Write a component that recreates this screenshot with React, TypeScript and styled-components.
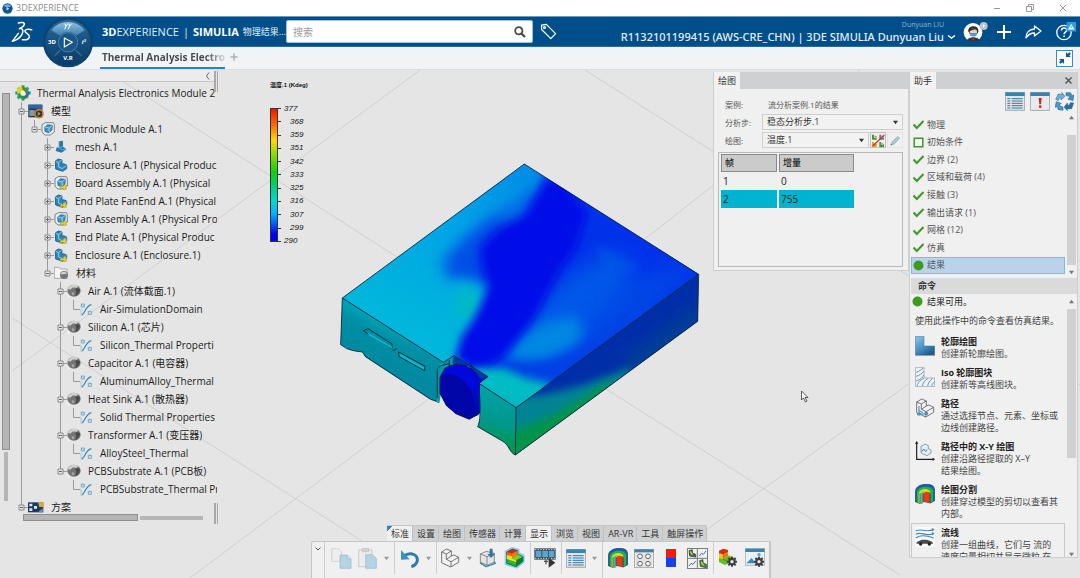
import React from "react";
import styled, { createGlobalStyle } from "styled-components";

const GlobalStyle = createGlobalStyle`
  * { box-sizing: border-box; }
  html, body { margin: 0; padding: 0; }
  body { font-family: "Open Sans", "Noto Sans CJK SC", sans-serif; color: #333; background: #e5e5e5; }
  button, input, select { font: inherit; color: inherit; margin: 0; padding: 0; }
  button { border: 0; background: none; display: inline-flex; align-items: center; justify-content: center; }
  ul { list-style: none; margin: 0; padding: 0; }
  h2, h3, p { margin: 0; font: inherit; }
  svg { display: block; flex: none; }
`;

/* ---------- frame ---------- */

const Page = styled.div`
  display: flex;
  flex-direction: column;
  min-height: 100vh;
`;

const TitleBar = styled.div`
  display: flex;
  align-items: center;
  height: 16px;
  padding: 0 12px 0 2px;
  gap: 3px;
  background: #fff;
  color: #8c8c8c;
  font-size: 9px;
  line-height: 16px;
`;

const WindowButtons = styled.div`
  display: flex;
  gap: 22px;
  margin-left: auto;
  button { width: 11px; height: 11px; }
`;

const TopBar = styled.header`
  position: relative;
  display: flex;
  align-items: center;
  height: 31px;
  padding: 0 4px 0 11px;
  background: #004f8a;
  border-top: 1px solid #6f9abb;
  border-bottom: 1px solid #2a6a98;
  color: #fff;
`;

const Compass = styled.button`
  position: absolute;
  left: 42px;
  top: 0;
  z-index: 2;
`;

const Brand = styled.div`
  display: flex;
  gap: 4px;
  margin-left: 69px;
  width: 184px;
  font-size: 11px;
  line-height: 16px;
  white-space: nowrap;
  color: #e4eef6;
  b { color: #fff; }
  small { font-size: 9px; }
`;

const SearchBox = styled.label`
  display: flex;
  align-items: center;
  width: 247px;
  height: 23px;
  padding: 0 6px;
  background: #fff;
  border: 1px solid #9fc3dc;
  border-radius: 2px;
  input {
    flex: 1;
    min-width: 0;
    border: 0;
    outline: 0;
    font-size: 10px;
    color: #333;
    background: none;
  }
  input::placeholder { color: #999; opacity: 1; }
`;

const TagButton = styled.button`
  margin-left: 7px;
`;

const Account = styled.div`
  display: flex;
  flex-direction: column;
  align-items: flex-end;
  margin-left: auto;
  padding-top: 2px;
  white-space: nowrap;
`;

const UserName = styled.span`
  padding-right: 12px;
  font-size: 7px;
  line-height: 8px;
  color: #8fb2cf;
`;

const TenantButton = styled.button`
  gap: 3px;
  font-family: "Noto Sans", "Noto Sans CJK SC", sans-serif;
  font-size: 11px;
  font-weight: 500;
  line-height: 16px;
  color: #e4eef6;
`;

const TopActions = styled.div`
  display: flex;
  align-items: center;
  gap: 14px;
  margin-left: 7px;
  svg { overflow: visible; }
`;

const TabBar = styled.nav`
  display: flex;
  align-items: stretch;
  height: 23px;
  padding: 0 7px 0 100px;
  background: #f2f3f5;
  border-bottom: 1px solid #dcdddf;
`;

const DocTab = styled.a`
  width: 125px;
  padding: 0 0 0 2px;
  border-bottom: 2px solid #2f83bd;
  overflow: hidden;
  font-size: 10px;
  font-weight: 700;
  line-height: 20px;
  text-decoration: none;
  white-space: nowrap;
  color: transparent;
  background: linear-gradient(90deg, #4a4a4a 85%, #dadada) text;
`;

const AddTab = styled.button`
  width: 18px;
  height: 20px;
`;

const RestoreButton = styled.button`
  align-self: center;
  width: 17px;
  height: 17px;
  margin-left: auto;
  background: #fff;
  border: 1px solid #4a88b4;
`;

/* ---------- workspace ---------- */

const Workspace = styled.main`
  flex: 1;
  display: grid;
  grid-template: minmax(508px, 1fr) / minmax(0, 1fr);
`;

const Scene = styled.svg`
  grid-area: 1 / 1;
  width: 100%;
  height: 100%;
`;

const Panels = styled.div`
  grid-area: 1 / 1;
  z-index: 1;
  display: flex;
  align-items: stretch;
`;

/* ---------- specification tree ---------- */

const TreePanel = styled.aside`
  display: flex;
  flex-direction: column;
  width: 218px;
`;

const TreeTop = styled.div`
  display: flex;
  justify-content: flex-end;
  align-items: center;
  height: 12px;
  margin-right: 4px;
  padding-right: 4px;
  background: #ececec;
  border-bottom: 1px solid #c9c9c9;
`;

const TreeBody = styled.div`
  display: flex;
  flex: 1;
`;

const VerticalScroll = styled.div`
  display: flex;
  flex-direction: column;
  align-items: center;
  width: 15px;
  gap: 2px;
  padding: 11px 4px 0 0;
`;

const Thumb = styled.span<{ $w: number; $h: number; $edge?: boolean }>`
  width: ${(p) => p.$w}px;
  height: ${(p) => p.$h}px;
  background: #b5b5b5;
  border: ${(p) => (p.$edge ? "1px solid #8f8f8f" : "0")};
`;

const HorizontalScroll = styled.div`
  display: flex;
  align-items: center;
  gap: 2px;
  padding-left: 8px;
  margin-top: -2px;
`;

const TreeColumn = styled.div`
  width: 202px;
  padding-top: 2px;
  overflow: hidden;
`;

const TreeRow = styled.li`
  display: flex;
  align-items: center;
  height: 18px;
  white-space: nowrap;
`;

const TreeLabel = styled.span<{ $root?: boolean }>`
  padding-left: ${(p) => (p.$root ? 6 : 7)}px;
  font-size: 10px;
  line-height: 18px;
  color: #1c1c1c;
`;

const Splitter = styled.div`
  display: flex;
  flex-direction: column;
  justify-content: space-between;
  width: 4px;
  margin: -11px 0 0 -3px;
  padding-bottom: 54px;
  span { height: 21px; border: solid #a9a9a9; border-width: 0 1px 0 2px; }
`;

/* ---------- centre ---------- */

const Centre = styled.section`
  display: flex;
  flex: 1;
  flex-direction: column;
  justify-content: space-between;
  min-width: 0;
`;

const CentreTop = styled.div`
  display: flex;
  justify-content: space-between;
  align-items: flex-start;
  padding: 0 0 0 52px;
`;

const Legend = styled.div`
  padding-top: 9px;
  font-family: "Liberation Sans", "Noto Sans CJK SC", sans-serif;
  font-size: 8px;
  color: #111;
`;

const LegendTitle = styled.h2`
  font-size: 6px;
  font-weight: 700;
  line-height: 12px;
  margin-bottom: 11px;
`;

const LegendBody = styled.div`
  display: flex;
  align-items: center;
  height: 146px;
`;

const ColourBar = styled.div`
  width: 8px;
  height: 134px;
  border: 1px solid #333;
  background: linear-gradient(#f01800, #ff6a00 12%, #ffd800 24%, #7ed800 36%, #10d010 48%, #00d070 58%, #00d8d8 70%, #00b4ff 79%, #0050ff 88%, #0000f0 95%);
`;

const LegendScale = styled.ul`
  display: flex;
  flex-direction: column;
  height: 146px;
`;

const LegendMark = styled.li<{ $end: boolean }>`
  display: flex;
  flex: 1;
  align-items: center;
  gap: ${(p) => (p.$end ? 3 : 9)}px;
  line-height: 12px;
  font-style: italic;
  &::before { content: ""; width: 3px; height: 1px; background: #333; }
`;

/* ---------- docked panels ---------- */

const PanelTabs = styled.div`
  display: flex;
  align-items: stretch;
  height: 17px;
  background: #cfd0d2;
  button { height: 17px; }
`;

const PanelTab = styled.button`
  padding: 0 4px;
  background: #f2f2f2;
  font-size: 9px;
  line-height: 17px;
`;

const ClosePanel = styled.button`
  width: 17px;
  margin-left: auto;
`;

const PlotPanel = styled.section`
  width: 196px;
  margin: 2px 0 0;
  background: #f0f0f0;
  border: 1px solid #cdced0;
  border-width: 0 1px 1px;
`;

const PlotForm = styled.div`
  display: grid;
  grid-template-columns: 37px minmax(0, 1fr);
  grid-auto-rows: 18px;
  align-items: center;
  padding: 6px 5px 3px 11px;
  font-size: 8px;
  color: #555;
`;

const CaseName = styled.output`
  padding-left: 6px;
`;

const FieldRow = styled.div`
  display: flex;
  align-items: center;
  gap: 1px;
`;

const SelectWrap = styled.div`
  display: grid;
  flex: 1;
  align-items: center;
  select {
    grid-area: 1 / 1;
    width: 100%;
    height: 16px;
    padding: 0 4px;
    appearance: none;
    background: #f2f2f2;
    border: 1px solid #cfcfcf;
    border-radius: 0;
    font-size: 9px;
    line-height: 14px;
    color: #333;
  }
  svg { grid-area: 1 / 1; justify-self: end; margin-right: 5px; pointer-events: none; }
`;

const SmallButton = styled.button<{ $raised?: boolean }>`
  width: 16px;
  height: 16px;
  border: 1px solid ${(p) => (p.$raised ? "#bfbfbf" : "#e4e4e4")};
`;

const FrameBox = styled.div`
  min-height: 115px;
  margin: 0 5px 3px 4px;
  border: 1px solid #b9b9bb;
`;

const FrameTable = styled.table`
  width: 137px;
  margin-top: 1px;
  border-spacing: 2px 0;
  table-layout: fixed;
  font-size: 10px;
  line-height: 16px;
  color: #222;
  th { height: 18px; padding: 0 3px; font-size: 9px; font-weight: 500; text-align: left; background: #cbcbcb; border: 1px solid #8a8a8a; }
  th:first-child { width: 56px; }
  td { height: 18px; padding: 0 2px; }
`;

const FrameRow = styled.tr<{ $selected?: boolean }>`
  td { background: ${(p) => (p.$selected ? "#00b4cf" : "transparent")}; }
`;

const AssistantPanel = styled.aside`
  display: flex;
  flex-direction: column;
  align-self: flex-start;
  width: 169px;
  margin: 2px 2px 20px 0;
  background: #f0f0f0;
  border: 1px solid #cdced0;
  border-width: 0 1px 1px;
`;

const AssistantTools = styled.div`
  display: flex;
  justify-content: flex-end;
  gap: 5px;
  padding: 3px 3px 4px;
`;

const StepArea = styled.div`
  display: flex;
  height: 160px;
  padding-left: 1px;
`;

const StepList = styled.ul`
  display: flex;
  flex: 1;
  flex-direction: column;
  height: 159px;
  padding-top: 1px;
`;

const Step = styled.li<{ $current?: boolean }>`
  display: flex;
  flex: 1;
  align-items: center;
  gap: 3px;
  padding-left: 1px;
  border: 1px solid ${(p) => (p.$current ? "#84b9de" : "transparent")};
  background: ${(p) => (p.$current ? "#bad3ea" : "transparent")};
  font-size: 9px;
  line-height: 14px;
  color: #555;
`;

const Scroller = styled.div`
  display: flex;
  flex-direction: column;
  align-items: center;
  width: 12px;
  span { width: 9px; background: #cfd0d2; }
`;

const StepThumb = styled.span`
  flex: 1;
  margin: 15px 0 5px;
`;

const CommandThumb = styled.span`
  height: 149px;
  margin: 5px 0 auto;
`;

const SectionTitle = styled.h2`
  height: 16px;
  margin: 3px 0 0 1px;
  padding-left: 7px;
  background: #dadada;
  font-size: 9px;
  font-weight: 700;
  line-height: 16px;
`;

const CommandArea = styled.div`
  display: flex;
  height: 263px;
  overflow: hidden;
  ${Scroller} { padding-top: 5px; }
`;

const CommandColumn = styled.div`
  flex: 1;
  min-width: 0;
  font-size: 9px;
  line-height: 12px;
  color: #444;
`;

const Status = styled.p`
  display: flex;
  align-items: center;
  gap: 4px;
  padding-left: 2px;
  height: 15px;
  color: #222;
`;

const Hint = styled.p`
  padding: 6px 0 5px 5px;
  white-space: nowrap;
`;

const Command = styled.li<{ $hover?: boolean }>`
  display: flex;
  gap: 6px;
  margin-left: 1px;
  padding: 3px 0 3px 3px;
  border: 1px solid ${(p) => (p.$hover ? "#c8c8c8" : "transparent")};
  border-width: 1px 1px 0;
  white-space: pre-line;
  h3 { font-weight: 700; color: #222; }
`;

/* ---------- action bar ---------- */

const ActionBar = styled.section`
  width: 460px;
  margin-left: 93px;
`;

const ActionTabs = styled.div`
  display: flex;
  margin-left: 76px;
`;

const ActionTab = styled.button<{ $active?: boolean; $first?: boolean }>`
  height: 16px;
  padding: 0 4px;
  font-size: 9px;
  line-height: 15px;
  color: #333;
  background: ${(p) => (p.$first ? "linear-gradient(135deg, #2e84c0 4px, transparent 4px), " : "")}${(p) => (p.$active ? "linear-gradient(#f0f0f0, #f0f0f0)" : "linear-gradient(#cfd0d2, #cfd0d2)")};
  border-top: 1px solid #c4c5c7;
  box-shadow: inset -1px 0 #bfc0c2;
`;

const ActionBody = styled.div`
  display: flex;
  height: 37px;
  background: #f0f0f0;
  border: 1px solid #c4c5c7;
  border-width: 1px 2px 0 1px;
  border-radius: 3px 0 0 0;
`;

const Collapse = styled.button`
  width: 12px;
  height: 14px;
`;

const Group = styled.div<{ $gap: number; $left: number; $right: number; $tall?: boolean }>`
  display: flex;
  align-items: center;
  align-self: flex-start;
  gap: ${(p) => p.$gap}px;
  height: ${(p) => (p.$tall ? 36 : 32)}px;
  padding: 0 ${(p) => p.$right}px ${(p) => (p.$tall ? 4 : 0)}px ${(p) => p.$left}px;
  border-left: 1px solid #cccdcf;
`;

const ChipButton = styled.button`
  width: 21px;
`;

/* ---------- icons ---------- */

const Caret = ({ up, c = "#777", s = 5 }: { up?: boolean; c?: string; s?: number }) => (
  <svg width={s} height={s} viewBox="0 0 6 6" aria-hidden>
    <path d={up ? "M0 5h6L3 1z" : "M0 1h6L3 5z"} fill={c} />
  </svg>
);

const Globe = () => (
  <svg width="11" height="11" viewBox="0 0 12 12">
    <circle cx="6" cy="6" r="5.6" fill="#12588f" />
    <path d="M2 3.4a4.8 4.8 0 0 1 8 0C9 5 3 5 2 3.4z" fill="#6fb3dd" />
    <path d="M5 4.4l3 1.8-3 1.8z" fill="#cfe6f4" />
  </svg>
);

const Logo = () => (
  <svg width="22" height="22" viewBox="0 0 66 66" fill="none" stroke="#fff" strokeWidth="4.5" strokeLinecap="round" strokeLinejoin="round">
    <path d="M22 6c8-3 19-2 18 4-1 6-9 10-15 13 9-1 14 4 9 15C28 51 16 58 4 61l18-24" />
    <path d="M62 26c-10-3-21-1-20 5 1 6 15 8 13 17-2 8-14 9-21 8" />
  </svg>
);

const CompassArt = () => (
  <svg width="52" height="52" viewBox="0 0 156 156">
    <defs>
      <linearGradient id="cmp" x1="0" y1="0" x2="0" y2="1">
        <stop offset="0" stopColor="#2c6a9c" />
        <stop offset=".5" stopColor="#17507f" />
        <stop offset="1" stopColor="#0a3c68" />
      </linearGradient>
      <linearGradient id="cmpTop" x1="0" y1="0" x2="0" y2="1">
        <stop offset="0" stopColor="#8ebedd" />
        <stop offset="1" stopColor="#3b7fb0" />
      </linearGradient>
    </defs>
    <circle cx="78" cy="76" r="75" fill="#0c4372" />
    <circle cx="78" cy="76" r="68" fill="url(#cmp)" />
    <path d="M28 40A62 62 0 0 1 128 40L102 56a32 32 0 0 0-48 0z" fill="url(#cmpTop)" />
    <path d="M38 116l16-16M118 116l-16-16" stroke="#4d8ebd" strokeWidth="3" />
    <circle cx="78" cy="76" r="29" fill="#1a5688" stroke="#4383b3" strokeWidth="3" />
    <path d="M67 63v27l24-14z" fill="none" stroke="#fff" strokeWidth="3.5" strokeLinejoin="round" />
    <path d="M68 20l4 8 6-8M72 28l-4 9M80 20l3 7 6-7M83 27l-5 10" fill="none" stroke="#fff" strokeWidth="3" />
    <g fill="#fff" fontFamily="Open Sans, sans-serif" fontWeight="700" fontSize="18" textAnchor="middle">
      <text x="30" y="82">3D</text>
      <text x="125" y="82" fontStyle="italic">i²</text>
      <text x="78" y="128">V.R</text>
    </g>
  </svg>
);

const SearchIcon = () => (
  <svg width="12" height="12" viewBox="0 0 12 12" fill="none" stroke="#4a4a4a">
    <circle cx="4.8" cy="4.8" r="3.6" strokeWidth="1.8" />
    <path d="M7.6 7.6l3.4 3.4" strokeWidth="2.2" />
  </svg>
);

const TagIcon = () => (
  <svg width="17" height="17" viewBox="0 0 17 17" fill="none" stroke="#fff" strokeWidth="1.2" strokeLinejoin="round">
    <path d="M1.5 2.2l4.8-.8L15.6 10.600l-4.800 5L1.600 6.500z" />
    <circle cx="4.500" cy="4.500" r="1" />
  </svg>
);

const Avatar = () => (
  <svg width="20" height="22" viewBox="0 0 60 66">
    <circle cx="30" cy="34" r="28" fill="#fff" />
    <path d="M16 30c-2-16 26-20 30-4 1 8-2 10-4 12H20z" fill="#2b2a2c" />
    <ellipse cx="31" cy="33" rx="11" ry="11" fill="#f2cdb4" />
    <path d="M16 29c4-8 20-10 29-3-8-1-18 0-27 6z" fill="#2b2a2c" />
    <path d="M20 36h22v5c-5 7-17 7-22 0z" fill="#39a3dc" />
    <path d="M12 58c4-12 34-12 38 0-10 7-28 7-38 0z" fill="#2a3552" />
    <path d="M27 48h8l-4 13z" fill="#c0392b" />
    <circle cx="62" cy="15" r="12" fill="#b9c0c6" />
    <path d="M62 10v10M57 15h10" stroke="#eef" strokeWidth="3" />
  </svg>
);

const PlusIcon = () => (
  <svg width="14" height="14" viewBox="0 0 14 14" stroke="#fff" strokeWidth="2"><path d="M7 0v14M0 7h14" /></svg>
);

const ShareIcon = () => (
  <svg width="17" height="16" viewBox="0 0 17 16" fill="none" stroke="#fff" strokeWidth="1.300" strokeLinejoin="round">
    <path d="M9.500 2l6.500 5-6.500 5V9C6 9 3.500 10 1 14 1 8.500 4.500 5.200 9.500 5z" />
  </svg>
);

const HelpIcon = () => (
  <svg width="20" height="19" viewBox="0 0 20 19" fill="none">
    <circle cx="8" cy="10.500" r="7.200" stroke="#fff" strokeWidth="1.300" />
    <path d="M5.400 8.600c0-3.600 5.200-3.400 5.200-.4 0 2-2.500 2-2.500 4M8.100 13.600v1.400" stroke="#fff" strokeWidth="1.500" />
    <path d="M10.500 0H20v9.500h-9.500z" fill="#2a9fdc" />
    <path d="M15.200 2l3.400 5.600h-6.800z" fill="#fff" />
    <path d="M15.200 4v2" stroke="#2a9fdc" />
  </svg>
);

const RootGear = () => (
  <svg width="16" height="16" viewBox="0 0 48 48">
    <g strokeWidth="9">
      <path d="M24 1v46" stroke="#3a9a2c" /><path d="M1 24h46" stroke="#1f7fc0" />
      <path d="M8 8l32 32" stroke="#e2c21c" /><path d="M40 8L8 40" stroke="#2a9ac0" />
    </g>
    <circle cx="24" cy="24" r="14" fill="none" stroke="#2f9a3c" strokeWidth="8" />
    <path d="M10 26a14 14 0 0 1 12-16" fill="none" stroke="#e8d41c" strokeWidth="8" />
    <path d="M38 22a14 14 0 0 1-12 16" fill="none" stroke="#1c78bc" strokeWidth="8" />
    <circle cx="24" cy="24" r="8" fill="#f4f6d0" />
    <path d="M27 14l7 8" stroke="#e04a1c" strokeWidth="4" />
  </svg>
);

const ModelIcon = () => (
  <svg width="16" height="15" viewBox="0 0 48 45">
    <path d="M1 2h42v38H1z" fill="#23364e" /><path d="M1 2h42v12H1z" fill="#2d66a8" />
    <path d="M4 18h16v18H4z" fill="#8796a4" />
    <circle cx="33" cy="29" r="12" fill="#3a2a14" stroke="#c88430" strokeWidth="5" />
    <path d="M29 22v14l10-7z" fill="#6a98c8" />
  </svg>
);

const Wrench = () => <path d="M20 29l6 3 6-6 7 3-4 5 3 5-7 2-3-4-10 2z" fill="#e6d02a" stroke="#a08c10" strokeWidth="1.500" />;

const ProductIcon = ({ wrench }: { wrench?: boolean }) => (
  <svg width="14" height="14" viewBox="0 0 42 42">
    <path d="M3 8l10-6h24l3 6v22l-12 9H12l-9-8z" fill="#eceef0" stroke="#5f6b75" strokeWidth="2.500" />
    <path d="M11 15l9-7 14 2-1 14-8 8-13-3z" fill="#3f92c4" stroke="#1c5c88" strokeWidth="2" />
    <path d="M11 15l13 3 10-8M24 18l1 14" fill="none" stroke="#a8d8f0" strokeWidth="2.500" />
    {wrench && <Wrench />}
  </svg>
);

const PartIcon = ({ wrench }: { wrench?: boolean }) => (
  <svg width="14" height="14" viewBox="0 0 42 42" strokeLinejoin="round">
    <path d="M4 9l9-6 11 3v13l5-2 9 4v11l-12 8L5 33z" fill="#2f86b8" stroke="#1a587f" strokeWidth="2.500" />
    <path d="M5 10l9 4v13l12 5M14 13l9-6M26 31l11-8" fill="none" stroke="#a6dcf4" strokeWidth="2.500" />
    {wrench && <Wrench />}
  </svg>
);

const MeshIcon = () => (
  <svg width="14" height="14" viewBox="0 0 42 42">
    <path d="M15 4l12-2v18l10 8-14 10-18-5 3-11 7 1z" fill="#2878aa" />
    <path d="M15 4v19l9 6M27 20l-12 3M24 29l13-1" fill="none" stroke="#5fb0d8" strokeWidth="2.500" />
  </svg>
);

const FolderIcon = () => (
  <svg width="15" height="14" viewBox="0 0 45 42">
    <path d="M1 4h14l4 5h20v28H1z" fill="#f4f4f4" stroke="#8b8b8b" strokeWidth="2" />
    <circle cx="30" cy="27" r="12" fill="#777" /><path d="M20 24c4-9 16-9 20 0-8-3-12 3-20 0z" fill="#d6d6d6" />
  </svg>
);

const BallIcon = () => (
  <svg width="14" height="14" viewBox="0 0 42 42">
    <ellipse cx="21" cy="20" rx="20" ry="18" fill="#757575" />
    <path d="M3 14C10-1 30 0 33 8c-7 8-14-2-20 6-3 4-8 3-10 0z" fill="#d2d2d2" />
    <path d="M24 16c6-6 13-3 15 2-2 10-8 16-15 18 5-9 6-14 0-20z" fill="#484848" />
    <path d="M14 26c4-3 8 0 8 6-4 3-8 0-8-6z" fill="#a8a8a8" />
    <path d="M0 28l11 12H2z" fill="#f6f6f6" />
  </svg>
);

const PropertyIcon = () => (
  <svg width="13" height="13" viewBox="0 0 39 39" fill="none">
    <path d="M5 37C16 32 15 10 34 5" stroke="#2f86b8" strokeWidth="3.500" />
    <path d="M4 3h9v9H4zM25 25h9v9h-9z" fill="#cfe2ee" stroke="#5a9cc4" strokeWidth="2.500" />
    <path d="M3 17v20" stroke="#90b8d0" strokeWidth="2" />
  </svg>
);

const ScenarioIcon = () => (
  <svg width="16" height="11" viewBox="0 0 48 33">
    <path d="M0 1h46v30H0z" fill="#1d3a66" />
    <path d="M4 5h9v8H4zM4 19h9v8H4zM18 12h9v8h-9z" fill="#dde8f2" />
    <path d="M30 1h16v14H34z" fill="#d8b02a" /><path d="M30 31l14-12v12z" fill="#7e8d9a" />
  </svg>
);

const CheckIcon = () => (
  <svg width="11" height="11" viewBox="0 0 11 11" fill="none" stroke="#3a9a22" strokeWidth="2"><path d="M.5 5.500l3.300 3.500L10.500 2" /></svg>
);
const SquareIcon = () => (
  <svg width="11" height="11" viewBox="0 0 11 11"><path d="M1.200 1.200h8.600v8.600H1.200z" fill="#fbfbfb" stroke="#3a9a22" strokeWidth="1.500" /></svg>
);
const DotIcon = () => (
  <svg width="11" height="11" viewBox="0 0 11 11"><circle cx="5.500" cy="5.500" r="5" fill="#3f9a20" /></svg>
);

const ListWindow = () => (
  <svg width="20" height="19" viewBox="0 0 60 57">
    <path d="M1 1h58v54H1z" fill="#e2e6ea" stroke="#7c868e" strokeWidth="2" /><path d="M1 1h58v11H1z" fill="#3a82b0" />
    <path d="M7 20h9M7 27h9M7 34h9M7 41h9M7 48h9M20 20h33M20 27h33M20 34h33M20 41h33M20 48h33" stroke="#3576a4" strokeWidth="3" />
  </svg>
);
const AlertWindow = () => (
  <svg width="20" height="19" viewBox="0 0 60 57">
    <path d="M1 1h58v54H1z" fill="#e8eaec" stroke="#7c868e" strokeWidth="2" /><path d="M1 1h58v11H1z" fill="#3a82b0" />
    <path d="M26 18h9l-2 19h-5z" fill="#cc2418" /><circle cx="30.500" cy="44" r="4" fill="#cc2418" />
  </svg>
);
const SyncIcon = () => (
  <svg width="19" height="19" viewBox="0 0 57 57" strokeLinejoin="round">
    <path d="M2 22L10 6l13 1-3-6 10 12-12 11 0-7-5 1-3 8z" fill="#6ab2da" stroke="#1f5c86" strokeWidth="1.500" />
    <path d="M33 2h14l4 9 6-3-3 18-16-5 6-3-3-6-8-1z" fill="#3f90c0" stroke="#1f5c86" strokeWidth="1.500" />
    <path d="M56 33l-6 17-14 1 2 5-11-10 10-13 1 7 5-1 3-7z" fill="#2a6f9c" stroke="#1f5c86" strokeWidth="1.500" />
    <path d="M24 55l-14-2-4-9-6 2 4-17 15 5-5 3 3 6 7 2z" fill="#4a9ac8" stroke="#1f5c86" strokeWidth="1.500" />
  </svg>
);

const ContourIcon = () => (
  <svg width="20" height="20" viewBox="0 0 60 60">
    <defs><linearGradient id="ct" x1="0" y1="0" x2=".6" y2="1"><stop offset="0" stopColor="#8cc8ee" /><stop offset=".6" stopColor="#4a90c0" /><stop offset="1" stopColor="#1f5c8a" /></linearGradient></defs>
    <path d="M1 1h26v29h32v28H1z" fill="url(#ct)" stroke="#3a6e92" strokeWidth="1.500" />
  </svg>
);
const IsoIcon = () => (
  <svg width="20" height="20" viewBox="0 0 60 60" fill="none">
    <path d="M1 1h26v32h32v26H1z" fill="#eef2f4" stroke="#8c969c" strokeWidth="2" />
    <path d="M3 16C10 14 20 8 24 3M3 28c10-2 18-8 23-15M3 42c12-3 20-10 23-18M6 57c4-14 14-20 21-24M22 57c2-10 8-18 16-22M38 57c1-8 6-16 14-22M50 57c1-5 4-9 8-12" stroke="#4a8ab4" strokeWidth="2.500" />
  </svg>
);
const SolidL = ({ path }: { path?: boolean }) => (
  <svg width="20" height="20" viewBox="0 0 60 60" fill="#f2f2f2" stroke="#5c5c5c" strokeWidth="2.500" strokeLinejoin="round">
    <path d="M5 12L20 3l14 6v15l8-3 14 7v15L32 57 5 44z" />
    <path d="M5 12l14 6v16l14 7M19 18L34 9M19 34l15-10M33 41v16M33 41l23-13" fill="none" />
    {path && <path d="M12 24v24h22M12 38l12 6M8 46h8v5H8zM30 44h8v5h-8z" fill="none" stroke="#2f86b8" strokeWidth="3" />}
  </svg>
);
const XYIcon = () => (
  <svg width="20" height="20" viewBox="0 0 60 60">
    <path d="M5 4v51h52" fill="none" stroke="#1c1c1c" strokeWidth="3.500" />
    <path d="M0 8l5-8 5 8zM53 50l7 5-7 5z" fill="#1c1c1c" />
    <path d="M18 16l12-7 10 5v9l8 4v9l-12 8-18-8z" fill="#e6edf2" stroke="#66747e" strokeWidth="2" />
    <path d="M20 32l6-8 6 8 4-6" stroke="#2f86b8" strokeWidth="3" fill="none" />
  </svg>
);
const ArchIcon = () => (
  <svg width="20" height="20" viewBox="0 0 60 60" strokeLinejoin="round">
    <path d="M1 22L4 13C14-2 48-2 56 8l3 10v32l-13 7-22-5v4l-8 3L1 53z" fill="#1a5cc8" stroke="#1b3a50" strokeWidth="2" />
    <path d="M6 54V22C14 4 46 4 54 18v34l-8 4V28c-6-10-20-8-24 2v28l-6 1z" fill="#22b53a" />
    <path d="M11 56V27c6-14 28-16 35-4v8c-6-8-20-6-23 2v24l-7 2z" fill="#d8e020" />
    <path d="M16 57V30c3-6 8-8 12-9-4 4-5 8-5 12v24z" fill="#28c0d8" />
    <path d="M24 29c5-7 15-7 21-2v29l-21-5z" fill="#e83a16" />
    <path d="M24 29v23M45 26v30M15 28v30" stroke="#3a3a20" strokeWidth="2" />
  </svg>
);
const StreamIcon = () => (
  <svg width="20" height="20" viewBox="0 0 60 60" fill="none">
    <path d="M0 0h60v60H0z" fill="#fafafa" />
    <path d="M2 12c18-10 26 6 54-4M2 22c18-10 28 8 54-2M2 33c16-10 28-8 54 0" stroke="#3a88b8" strokeWidth="3.500" />
    <path d="M50 3l9 4-7 6zM50 15l9 4-7 6z" fill="#3a88b8" />
    <path d="M4 50c0-8 10-8 16-12h16c8 4 18 4 18 12z" fill="#4a4a4a" /><circle cx="17" cy="51" r="5" fill="#222" /><circle cx="43" cy="51" r="5" fill="#222" />
  </svg>
);

const CopyIcon = () => (
  <svg width="21" height="21" viewBox="0 0 63 63" strokeWidth="2">
    <path d="M2 2h20l10 10v28H2z" fill="#eeeeee" stroke="#c6c6c6" />
    <path d="M27 21h22l11 11v29H27z" fill="#b4d3e4" stroke="#93b8cc" /><path d="M49 21v11h11" fill="#dcebf3" stroke="#93b8cc" />
  </svg>
);
const PasteIcon = () => (
  <svg width="20" height="21" viewBox="0 0 60 63" strokeWidth="2">
    <path d="M2 6h40v50H2z" fill="#ececec" stroke="#bdbdbd" /><path d="M12 1h20v10H12z" fill="#d2d2d2" stroke="#bdbdbd" />
    <path d="M23 20h20l12 11v30H23z" fill="#b4d3e4" stroke="#93b8cc" />
  </svg>
);
const UndoIcon = () => (
  <svg width="20" height="19" viewBox="0 0 60 57">
    <path d="M15 19C34 8 54 18 52 35 50 45 44 50 34 53" fill="none" stroke="#2f7cac" strokeWidth="9" />
    <path d="M3 3v29l26-1z" fill="#3f8fc0" />
  </svg>
);
const CubeArrow = () => (
  <svg width="18" height="20" viewBox="0 0 54 60" strokeLinejoin="round">
    <path d="M3 44l18 12 28-10-6-6" fill="none" stroke="#2f86b8" strokeWidth="4" />
    <path d="M4 18l18-8 24 6v26L24 52 4 42z" fill="#e4e4e4" stroke="#777" strokeWidth="2.500" />
    <path d="M4 18l20 8v26M24 26l22-10" fill="none" stroke="#777" strokeWidth="2.500" />
    <path d="M32 2h9v16h7L36 30 25 18h7z" fill="#2a77a8" />
  </svg>
);
const RainbowPart = () => (
  <svg width="22" height="22" viewBox="0 0 66 66" strokeLinejoin="round">
    <path d="M5 13L24 3l20 5v10l15 7v20L38 62 5 52z" fill="#2a8fd0" stroke="#8ed0f0" strokeWidth="6" />
    <path d="M8 15l17-9 16 5v12l16 6v14L36 59 8 49z" fill="#2bb52f" stroke="#17446a" strokeWidth="2" />
    <path d="M8 15l17-9 16 5-17 9z" fill="#d62416" /><path d="M8 15l16 5v8L8 24z" fill="#e8641a" />
    <path d="M8 24l16 4v6l14 6 0 6-30-10z" fill="#f0dc1c" />
    <path d="M24 20l17-9v12l-17 11z" fill="#f07818" /><path d="M24 34l17-11 16 6-20 11z" fill="#7ed020" />
    <path d="M37 40l20-11v14L36 59z" fill="#157a2c" />
  </svg>
);
const GearShape = ({ x, y }: { x: number; y: number }) => (
  <g transform={`translate(${x} ${y})`} stroke="#3a3f44" strokeWidth="6">
    <path d="M0-15v30M-15 0h30M-11-11l22 22M11-11l-22 22" /><circle r="8" fill="#e8e8e8" strokeWidth="6" />
  </g>
);
const RainbowGear = () => (
  <svg width="20" height="20" viewBox="0 0 60 60">
    <path d="M3 9l12-7 15 4v14l16 6v16L20 50 3 42z" fill="#f0c81c" />
    <path d="M3 9l12-7 15 4v6l-14 7-13-3z" fill="#dc2a18" /><path d="M16 20l14-8v12l-14 8z" fill="#f07818" />
    <path d="M3 30l13 4 14-10 16 4v14L20 50 3 42z" fill="#5cc02c" />
    <path d="M3 9l13 5v20l12 5" fill="none" stroke="#6a4a18" strokeWidth="1.500" />
    <GearShape x={42} y={41} />
  </svg>
);
const FilmIcon = () => (
  <svg width="22" height="22" viewBox="0 0 66 66">
    <path d="M1 4h64v34H1z" fill="#3c4c58" /><path d="M5 12h17v18H5zM25 12h17v18H25zM45 12h16v18H45z" fill="#5aa6d0" />
    <path d="M3 8h60M3 34h60" stroke="#dfe6ea" strokeWidth="3" strokeDasharray="4 4" />
    <path d="M30 43h12M36 38v14" stroke="#555" strokeWidth="4" /><path d="M44 32v30l20-15z" fill="#333" />
  </svg>
);
const CirclesWindow = () => (
  <svg width="20" height="19" viewBox="0 0 60 57">
    <path d="M1 1h58v55H1z" fill="#e4e4e4" stroke="#7c868e" strokeWidth="2" /><path d="M1 1h58v9H1z" fill="#3a82b0" />
    <g fill="#f4f4f4" stroke="#666" strokeWidth="3"><circle cx="18" cy="22" r="7" /><circle cx="42" cy="22" r="7" /><circle cx="18" cy="44" r="7" /><circle cx="42" cy="44" r="7" /></g>
  </svg>
);
const RedBlue = () => (
  <svg width="10" height="18" viewBox="0 0 10 18"><path d="M0 0h10v9H0z" fill="#f01c0c" /><path d="M0 9h10v9H0z" fill="#1440f0" /></svg>
);
const QuadPlots = () => (
  <svg width="21" height="21" viewBox="0 0 63 63">
    <path d="M1 1h61v61H1z" fill="#f0f0f0" stroke="#666" strokeWidth="3" /><path d="M31 1v61M1 31h61" stroke="#777" strokeWidth="3" />
    <path d="M6 8l10-3v10l10 4v8L8 24z" fill="#2c7c50" stroke="#222" strokeWidth="2" /><path d="M38 38l10-3v10l10 4v10l-18-4z" fill="#3c9c40" stroke="#222" strokeWidth="2" />
    <path d="M10 10l6 10M42 42l8 10" stroke="#f0c818" strokeWidth="4" />
    <path d="M37 24l6-8 6 3 8-10M6 54l6-8 6 3 8-10" fill="none" stroke="#2f7cac" strokeWidth="3" />
  </svg>
);
const WindowGear = () => (
  <svg width="20" height="20" viewBox="0 0 60 60">
    <path d="M1 2h58v50H1z" fill="#eaf0f4" stroke="#8c969c" strokeWidth="2" /><path d="M1 2h58v10H1z" fill="#3a82b0" />
    <path d="M4 46l16-16 12 16z" fill="#3a88b8" /><circle cx="42" cy="20" r="5" fill="#5aa6d0" />
    <GearShape x={42} y={41} />
  </svg>
);
const PlotOff = () => (
  <svg width="13" height="13" viewBox="0 0 39 39" fill="none" strokeWidth="6">
    <path d="M3 2v12h11" stroke="#2f9a4c" /><path d="M25 2v12h11" stroke="#3a88b8" /><path d="M3 24v12h11" stroke="#e0a81c" /><path d="M25 24v12h11" stroke="#2f9a4c" />
    <path d="M8 6l6 4M30 6l6 4M8 29l6 4M30 29l6 4" stroke="#e8841c" strokeWidth="4" />
    <path d="M2 36L37 3" stroke="#e02c18" strokeWidth="4" />
  </svg>
);
const PencilIcon = () => (
  <svg width="11" height="11" viewBox="0 0 33 33"><path d="M2 31l4-10L23 4l6 6-17 17z" fill="#a9c8dc" stroke="#8fa9ba" strokeWidth="2" /><path d="M2 31l2-5 3 3z" fill="#666" /></svg>
);

/* ---------- tree data ---------- */

/* Guide characters: "|" a passing line, "+"/"-" a node, "_" the last open node, "L" a leaf elbow. */
const GuideCell = ({ kind }: { kind: string }) => (
  <svg width="13" height="18" viewBox="0 0 13 18" fill="none" stroke="#9a9a9a" aria-hidden>
    {kind === "|" && <path d="M6.500 0v18" />}
    {kind === "L" && <path d="M6.500 0v9.500H13" />}
    {"+-_".includes(kind) && (
      <>
        <path d={kind === "_" ? "M6.500 0v9.500H13" : "M6.500 0v18M6 9.500h7"} />
        <path d="M4 7h5v5H4z" fill="#e6e6e6" stroke="#8a8a8a" />
        <path d={kind === "+" ? "M5 9.500h3M6.500 8v3" : "M5 9.500h3"} stroke="#666" />
      </>
    )}
  </svg>
);

const TREE: [string, React.ReactNode, string][] = [
  ["-", <ModelIcon />, "模型"],
  ["|_", <ProductIcon />, "Electronic Module A.1"],
  ["| +", <MeshIcon />, "mesh A.1"],
  ["| +", <PartIcon />, "Enclosure A.1 (Physical Produc"],
  ["| +", <ProductIcon wrench />, "Board Assembly A.1 (Physical"],
  ["| +", <PartIcon wrench />, "End Plate FanEnd A.1 (Physical"],
  ["| +", <ProductIcon wrench />, "Fan Assembly A.1 (Physical Pro"],
  ["| +", <PartIcon wrench />, "End Plate A.1 (Physical Produc"],
  ["| +", <PartIcon wrench />, "Enclosure A.1 (Enclosure.1)"],
  ["| _", <FolderIcon />, "材料"],
  ["|  -", <BallIcon />, "Air A.1 (流体截面.1)"],
  ["|  |L", <PropertyIcon />, "Air-SimulationDomain"],
  ["|  -", <BallIcon />, "Silicon A.1 (芯片)"],
  ["|  |L", <PropertyIcon />, "Silicon_Thermal Properti"],
  ["|  -", <BallIcon />, "Capacitor A.1 (电容器)"],
  ["|  |L", <PropertyIcon />, "AluminumAlloy_Thermal"],
  ["|  -", <BallIcon />, "Heat Sink A.1 (散热器)"],
  ["|  |L", <PropertyIcon />, "Solid Thermal Properties"],
  ["|  -", <BallIcon />, "Transformer A.1 (变压器)"],
  ["|  |L", <PropertyIcon />, "AlloySteel_Thermal"],
  ["|  _", <BallIcon />, "PCBSubstrate A.1 (PCB板)"],
  ["|   L", <PropertyIcon />, "PCBSubstrate_Thermal Pr"],
  ["_", <ScenarioIcon />, "方案"],
];

const LEGEND = [377, 368, 359, 351, 342, 333, 325, 316, 307, 299, 290];

const STEPS: [string, "check" | "square" | "dot"][] = [
  ["物理", "check"],
  ["初始条件", "square"],
  ["边界 (2)", "check"],
  ["区域和载荷 (4)", "check"],
  ["接触 (3)", "check"],
  ["输出请求 (1)", "check"],
  ["网格 (12)", "check"],
  ["仿真", "check"],
  ["结果", "dot"],
];

const COMMANDS: [React.ReactNode, string, string][] = [
  [<ContourIcon />, "轮廓绘图", "创建新轮廓绘图。"],
  [<IsoIcon />, "Iso 轮廓图块", "创建新等高线图块。"],
  [<SolidL path />, "路径", "通过选择节点、元素、坐标或\n边线创建路径。"],
  [<XYIcon />, "路径中的 X-Y 绘图", "创建沿路径提取的 X–Y\n结果绘图。"],
  [<ArchIcon />, "绘图分割", "创建穿过模型的剪切以查看其\n内部。"],
  [<StreamIcon />, "流线", "创建一组曲线，它们与 流的\n速度向量相切并显示微粒 在"],
];

const ACTION_TABS = ["标准", "设置", "绘图", "传感器", "计算", "显示", "浏览", "视图", "AR-VR", "工具", "触屏操作"];

/* ---------- 3D scene ---------- */

const HeatModel = () => (
  <g transform="translate(330 150) scale(.33333)">
    <defs>
      <clipPath id="topFace"><path d="M583 42L1106 373 558 773 447 700 474 680 372 617 340 637 37 444z" /></clipPath>
      <clipPath id="sideFace"><path d="M1106 373L1103 514 556 915 558 773z" /></clipPath>
      <linearGradient id="topBase" gradientUnits="userSpaceOnUse" x1="580" y1="50" x2="330" y2="560">
        <stop offset="0" stopColor="#008ee6" /><stop offset=".45" stopColor="#00a4e6" /><stop offset="1" stopColor="#00b6da" />
      </linearGradient>
      <linearGradient id="leftFace" gradientUnits="userSpaceOnUse" x1="200" y1="540" x2="150" y2="640">
        <stop offset="0" stopColor="#00a0b4" /><stop offset=".3" stopColor="#008fa4" /><stop offset="1" stopColor="#0089a0" />
      </linearGradient>
      <linearGradient id="frontFace" gradientUnits="userSpaceOnUse" x1="510" y1="740" x2="490" y2="890">
        <stop offset="0" stopColor="#00a0a0" /><stop offset=".5" stopColor="#00988c" /><stop offset="1" stopColor="#00984c" />
      </linearGradient>
      {[6, 12, 20, 30].map((d) => (
        <filter key={d} id={`soft${d}`} x="-50%" y="-50%" width="200%" height="200%"><feGaussianBlur stdDeviation={d} /></filter>
      ))}
    </defs>
    <g clipPath="url(#topFace)">
      <path d="M0 0h1140v900H0z" fill="url(#topBase)" />
      <path d="M325 350C365 280 430 235 620 110l30 60-160 230-80-20z" fill="#0068e6" filter="url(#soft20)" />
      <path d="M345 385C360 330 420 260 500 200l60 40-80 170-60-35z" fill="#004ce6" filter="url(#soft20)" />
      <path d="M660 60L1200 360 620 800 400 660 560 300 600 180z" fill="#0030ea" filter="url(#soft20)" />
      <path d="M820 400L1106 340 920 540 660 710 560 670 740 600z" fill="#0046e6" filter="url(#soft30)" />
      <path d="M500 630C560 540 640 430 760 350c60-40 100-40 150-10-20 60-70 120-130 190-60 60-160 110-280 100z" fill="#0058e8" filter="url(#soft30)" />
      <path d="M800 280L930 355 850 370 800 500 760 480 820 370z" fill="#0056e8" filter="url(#soft12)" opacity=".7" />
      <path d="M520 620c40-60 90-100 200-120 50 10 50 60 10 90-60 40-140 60-210 30z" fill="#0088e2" filter="url(#soft20)" />
      <path d="M540 640C700 660 820 560 900 500L760 640 640 730 480 670z" fill="#0040e4" filter="url(#soft12)" opacity=".8" />
      <ellipse cx="410" cy="460" rx="34" ry="46" fill="#00bcc0" filter="url(#soft20)" />
      <path d="M650 85L700 90 770 190 740 290 690 360 610 510 530 610 450 670 375 625 395 560 430 510 460 450 474 405 455 350 450 290 500 240 590 190 625 130z" fill="#0008e8" filter="url(#soft12)" />
      <path d="M410 665L440 655 520 655 590 685 665 700 600 800 430 720z" fill="#00bcc4" filter="url(#soft12)" />
    </g>
    <g clipPath="url(#sideFace)">
      <path d="M500 300h660v640H500z" fill="#002ea8" />
      <path d="M880 620L1120 450 1120 560 880 720z" fill="#003c98" filter="url(#soft20)" />
      <path d="M520 740L640 735 760 705 900 655 920 730 560 980 500 900z" fill="#008494" filter="url(#soft12)" />
      <path d="M530 850L660 800 850 690 840 740 560 960z" fill="#009448" filter="url(#soft12)" />
    </g>
    <path d="M37 444L340 637 322 660 322 756 300 748 105 620 98 606 75 603 60 600 32 584z" fill="url(#leftFace)" />
    <path d="M322 660l18-23 32-20 20 30-50 30-14 82h-6z" fill="#0098a8" />
    <path d="M447 700L558 773 556 915C535 905 540 885 515 872L443 830l8-30z" fill="url(#frontFace)" />
    <path d="M372 617l102 63-27 20-30-50-50-10z" fill="#0038a8" />
    <path d="M330 680L345 655 375 642 405 645 432 662 446 682 460 686 450 700 450 790 418 808 375 790 350 768 330 730z" fill="#0008dc" />
    <path d="M330 682Q348 664 382 678 424 706 432 750L446 775 446 794 418 808 375 790 350 768 330 730z" fill="#0006a8" />
    <g fill="none" stroke="#0a1c30" strokeWidth="2.500" strokeLinejoin="round">
      <path d="M340 637L37 444 583 42 1106 373 558 773 447 700l27-20-102-63-32 20" />
      <path d="M37 444l-5 140 18 12 25 7 22 3 10 14 195 128 18 6M558 773l-2 142L1103 514l3-141M556 915C535 905 540 885 515 872L443 830c10-20 8-60 4-130" />
      <path d="M358 630v20M322 745v-84c4-14 14-16 36-20M330 682l15-27c30-20 62-12 87 7l14 20M330 682v48l20 38M375 790l43 18 30-20M420 640l12 16M430 720l12 40" />
      <path d="M100 542l14-6 72 46v14l-72-44zM188 602l12-6M206 606l78 42v14l-76-42z" />
    </g>
    <path d="M114 548l72 42v6l-70-40zM208 610l74 42v7l-72-40z" fill="#00bccc" />
  </g>
);

const SceneView = () => (
  <Scene viewBox="0 70 1080 508" preserveAspectRatio="xMidYMid slice" role="img" aria-label="温度">
    <path d="M105 70L397 257M606 389L900 575M12 371L420 70M190 578L430 398M645 239L860 70M12 318L420 578M640 578L1080 260M585 70L1080 385" fill="none" stroke="#cfcfcf" />
    <HeatModel />
    <path d="M801.500 391v9l2-2 2 4 1.500-1-2-3.500h3z" fill="#fff" stroke="#333" strokeWidth=".8" />
  </Scene>
);

/* ---------- app ---------- */

export default function App() {
  return (
    <Page>
      <GlobalStyle />
      <TitleBar>
        <Globe />
        <span>3DEXPERIENCE</span>
        <WindowButtons>
          <button aria-label="最小化"><svg width="8" height="8" viewBox="0 0 8 8"><path d="M1 4.500h6" stroke="#999" /></svg></button>
          <button aria-label="还原"><svg width="8" height="8" viewBox="0 0 8 8" fill="none" stroke="#999"><path d="M.5 2.500h5v5h-5zM2.500 2.500v-2h5v5h-2" /></svg></button>
          <button aria-label="关闭"><svg width="8" height="8" viewBox="0 0 8 8" stroke="#999"><path d="M1 1l6 6M7 1L1 7" /></svg></button>
        </WindowButtons>
      </TitleBar>

      <TopBar>
        <Logo />
        <Compass aria-label="罗盘"><CompassArt /></Compass>
        <Brand><span><b>3D</b>EXPERIENCE</span>|<b>SIMULIA</b><small>物理结果...</small></Brand>
        <SearchBox>
          <input type="text" placeholder="搜索" aria-label="搜索" />
          <SearchIcon />
        </SearchBox>
        <TagButton aria-label="标签"><TagIcon /></TagButton>
        <Account>
          <UserName>Dunyuan LIU</UserName>
          <TenantButton>
            R1132101199415 (AWS-CRE_CHN) | 3DE SIMULIA Dunyuan Liu
            <svg width="9" height="6" viewBox="0 0 9 6" fill="none" stroke="#fff" strokeWidth="1.500"><path d="M1 1.500l3.500 2.500L8 1.500" /></svg>
          </TenantButton>
        </Account>
        <TopActions>
          <button aria-label="个人资料"><Avatar /></button>
          <button aria-label="添加"><PlusIcon /></button>
          <button aria-label="共享"><ShareIcon /></button>
          <button aria-label="帮助"><HelpIcon /></button>
        </TopActions>
      </TopBar>

      <TabBar>
        <DocTab href="#doc">Thermal Analysis Electro</DocTab>
        <AddTab aria-label="新建选项卡"><svg width="8" height="8" viewBox="0 0 8 8" stroke="#b0b0b0" strokeWidth="1.500"><path d="M4 .5v7M.5 4h7" /></svg></AddTab>
        <RestoreButton aria-label="还原面板">
          <svg width="12" height="12" viewBox="0 0 12 12" fill="#0f5a94"><path d="M7 0v5h5L10.300 3.500 12 1.800 10.300.2 8.600 1.700zM5 12V7H0l1.700 1.500L0 10.200l1.700 1.600L3.400 10.300z" /></svg>
        </RestoreButton>
      </TabBar>

      <Workspace>
        <SceneView />
        <Panels>
          <TreePanel>
            <TreeTop>
              <button aria-label="折叠"><svg width="5" height="8" viewBox="0 0 5 8" fill="none" stroke="#666"><path d="M4 .5L1.500 4 4 7.500" /></svg></button>
            </TreeTop>
            <TreeBody>
              <VerticalScroll>
                <Thumb $w={8} $h={357} $edge />
                <Thumb $w={4} $h={49} />
              </VerticalScroll>
              <TreeColumn>
                <ul>
                  <TreeRow><RootGear /><TreeLabel $root>Thermal Analysis Electronics Module 2</TreeLabel></TreeRow>
                  {TREE.map(([guides, icon, label]) => (
                    <TreeRow key={label}>
                      {guides.split("").map((g, i) => <GuideCell key={i} kind={g} />)}
                      {icon}
                      <TreeLabel>{label}</TreeLabel>
                    </TreeRow>
                  ))}
                </ul>
                <HorizontalScroll>
                  <Thumb $w={115} $h={7} $edge />
                  <Thumb $w={63} $h={4} />
                </HorizontalScroll>
              </TreeColumn>
              <Splitter><span /><span /></Splitter>
            </TreeBody>
          </TreePanel>

          <Centre>
            <CentreTop>
              <Legend>
                <LegendTitle>温度.1 (Kdeg)</LegendTitle>
                <LegendBody>
                  <ColourBar />
                  <LegendScale>
                    {LEGEND.map((v, i) => <LegendMark key={v} $end={i === 0 || i === LEGEND.length - 1}>{v}</LegendMark>)}
                  </LegendScale>
                </LegendBody>
              </Legend>

              <PlotPanel>
                <PanelTabs><PanelTab>绘图</PanelTab></PanelTabs>
                <PlotForm>
                  <span>案例:</span>
                  <CaseName>流分析案例.1的结果</CaseName>
                  <label htmlFor="step">分析步:</label>
                  <SelectWrap><select id="step"><option>稳态分析步.1</option></select><Caret c="#333" /></SelectWrap>
                  <label htmlFor="plot">绘图:</label>
                  <FieldRow>
                    <SelectWrap><select id="plot"><option>温度.1</option></select><Caret c="#333" /></SelectWrap>
                    <SmallButton $raised aria-label="停用绘图"><PlotOff /></SmallButton>
                    <SmallButton aria-label="编辑"><PencilIcon /></SmallButton>
                  </FieldRow>
                </PlotForm>
                <FrameBox>
                  <FrameTable>
                    <thead><tr><th>帧</th><th>增量</th></tr></thead>
                    <tbody>
                      <FrameRow><td>1</td><td>0</td></FrameRow>
                      <FrameRow $selected><td>2</td><td>755</td></FrameRow>
                    </tbody>
                  </FrameTable>
                </FrameBox>
              </PlotPanel>
            </CentreTop>

            <ActionBar>
              <ActionTabs>
                {ACTION_TABS.map((t, i) => <ActionTab key={t} $first={i === 0} $active={i === 0 || t === "显示"}>{t}</ActionTab>)}
              </ActionTabs>
              <ActionBody>
                <Collapse aria-label="折叠工具栏"><svg width="6" height="4" viewBox="0 0 6 4" fill="none" stroke="#555"><path d="M.5.5L3 3 5.500.5" /></svg></Collapse>
                <Group $gap={6} $left={6} $right={5} $tall>
                  <button aria-label="复制"><CopyIcon /></button>
                  <button aria-label="粘贴"><PasteIcon /></button>
                  <Caret c="#999" />
                </Group>
                <Group $gap={6} $left={5} $right={5}>
                  <button aria-label="撤消"><UndoIcon /></button>
                  <Caret c="#999" />
                </Group>
                <Group $gap={7} $left={3} $right={4}>
                  <button aria-label="零件"><SolidL /></button>
                  <Caret c="#999" />
                  <button aria-label="更新"><CubeArrow /></button>
                  <button aria-label="轮廓"><RainbowPart /></button>
                </Group>
                <Group $gap={4} $left={3} $right={5}>
                  <button aria-label="动画"><FilmIcon /></button>
                </Group>
                <Group $gap={6} $left={4} $right={5}>
                  <button aria-label="列表"><ListWindow /></button>
                  <Caret c="#999" />
                </Group>
                <Group $gap={6} $left={5} $right={5} $tall>
                  <button aria-label="分割"><ArchIcon /></button>
                  <button aria-label="选项"><CirclesWindow /></button>
                  <ChipButton aria-label="颜色"><RedBlue /></ChipButton>
                  <button aria-label="多重绘图"><QuadPlots /></button>
                </Group>
                <Group $gap={7} $left={4} $right={0}>
                  <button aria-label="绘图设置"><RainbowGear /></button>
                  <button aria-label="显示设置"><WindowGear /></button>
                </Group>
              </ActionBody>
            </ActionBar>
          </Centre>

          <AssistantPanel>
            <PanelTabs>
              <PanelTab>助手</PanelTab>
              <ClosePanel aria-label="关闭"><svg width="7" height="7" viewBox="0 0 7 7" stroke="#555" strokeWidth="1.500"><path d="M.5.5l6 6M6.500.5l-6 6" /></svg></ClosePanel>
            </PanelTabs>
            <AssistantTools>
              <button aria-label="列表"><ListWindow /></button>
              <button aria-label="警告"><AlertWindow /></button>
              <button aria-label="刷新"><SyncIcon /></button>
            </AssistantTools>
            <StepArea>
              <StepList>
                {STEPS.map(([label, state]) => (
                  <Step key={label} $current={state === "dot"}>
                    {state === "check" ? <CheckIcon /> : state === "square" ? <SquareIcon /> : <DotIcon />}
                    {label}
                  </Step>
                ))}
              </StepList>
              <Scroller><Caret up /><StepThumb /><Caret /></Scroller>
            </StepArea>
            <SectionTitle>命令</SectionTitle>
            <CommandArea>
              <CommandColumn>
                <Status><DotIcon />结果可用。</Status>
                <Hint>使用此操作中的命令查看仿真结果。</Hint>
                <ul>
                  {COMMANDS.map(([icon, title, text], i) => (
                    <Command key={title} $hover={i === COMMANDS.length - 1}>
                      {icon}
                      <div><h3>{title}</h3><p>{text}</p></div>
                    </Command>
                  ))}
                </ul>
              </CommandColumn>
              <Scroller><Caret up /><CommandThumb /><Caret /></Scroller>
            </CommandArea>
          </AssistantPanel>
        </Panels>
      </Workspace>
    </Page>
  );
}
